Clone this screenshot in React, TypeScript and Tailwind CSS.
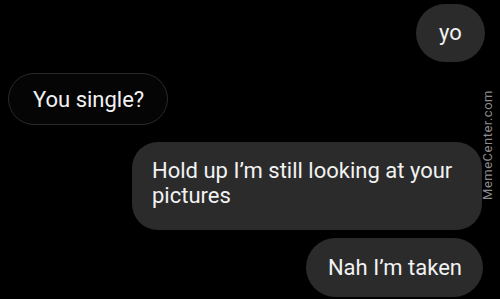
import React from "react";

const font = { fontFamily: "Roboto, 'Noto Sans', sans-serif" };

export default function App() {
  return (
    <div
      className="relative h-[299px] w-[500px] overflow-hidden bg-black text-[22px] text-[#f2f2f2]"
      style={font}
    >
      <div className="flex flex-col">
        {/* yo */}
        <div className="mt-[4px] mr-[15px] flex h-[58px] w-[69px] items-center justify-center self-end rounded-full bg-[#2b2b2b] pb-[2px]">
          yo
        </div>

        {/* You single? */}
        <div className="mt-[11px] ml-[8px] flex h-[52px] items-center self-start rounded-full border-[1.5px] border-[#2a2a2a] bg-[#050505] pl-[24px] pr-[23px]">
          You single?
        </div>

        {/* Hold up */}
        <div className="mt-[17px] mr-[18px] w-[350px] self-end rounded-[26px] bg-[#2b2b2b] pt-[16px] pb-[22px] pl-[20px] pr-[14px] leading-[25px]">
          Hold up I’m still looking at your pictures
        </div>

        {/* Nah I'm taken */}
        <div className="mt-[8px] mr-[17px] flex h-[59px] items-center self-end rounded-full bg-[#2b2b2b] pl-[22px] pr-[21px]">
          Nah I’m taken
        </div>
      </div>

      {/* watermark */}
      <div className="absolute top-[145px] left-[488px] -translate-x-1/2 -translate-y-1/2 -rotate-90 whitespace-nowrap text-[13px] tracking-[0.5px] text-[#8c8c8c]">
        MemeCenter.com
      </div>
    </div>
  );
}
